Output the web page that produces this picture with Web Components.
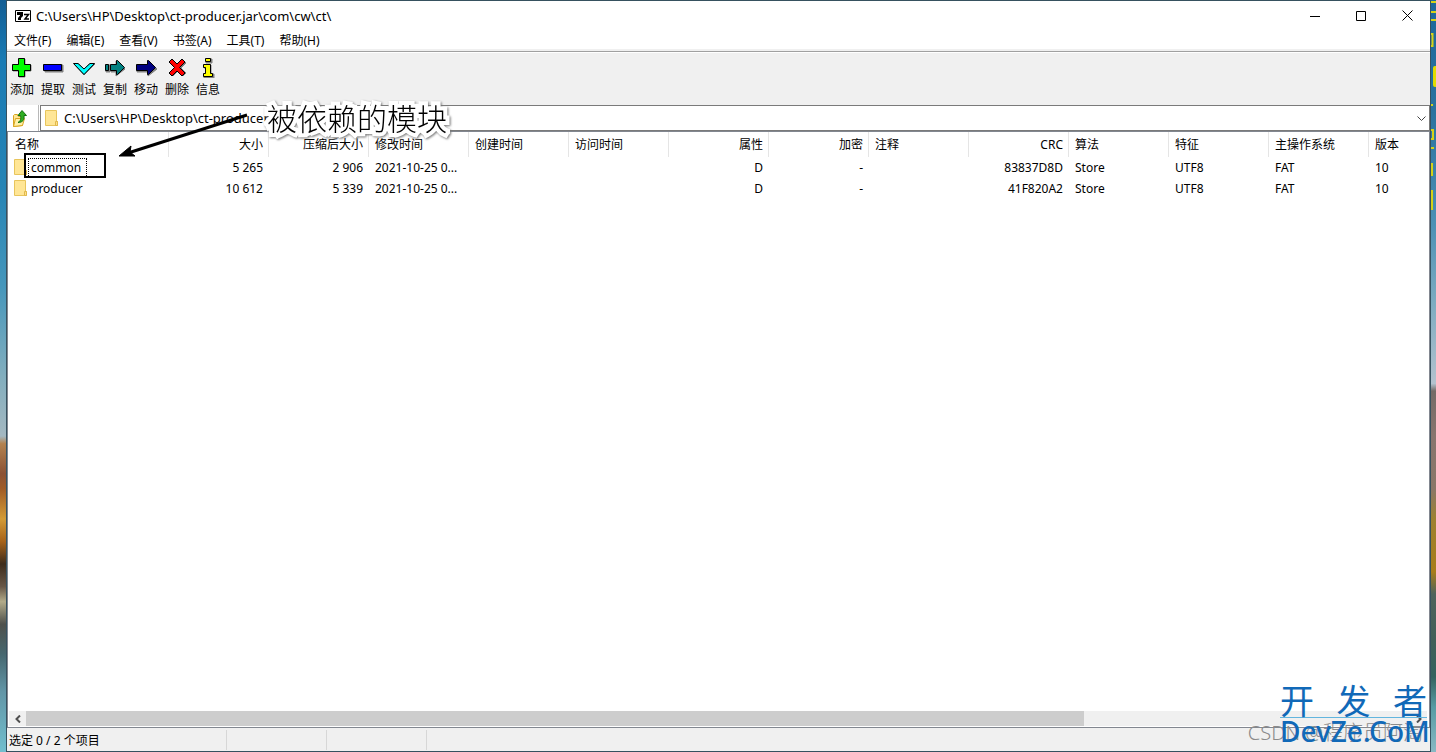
<!DOCTYPE html>
<html lang="zh-CN">
<head>
<meta charset="utf-8">
<title>C:\Users\HP\Desktop\ct-producer.jar\com\cw\ct\</title>
<style>
html, body { margin: 0; height: 100%; overflow: hidden; }
body { font: 12px/16px "Noto Sans", "Noto Sans CJK SC", sans-serif; color: #000; }
</style>
</head>
<body>
<desk-top>
  <archive-window>
    <title-bar slot="title">C:\Users\HP\Desktop\ct-producer.jar\com\cw\ct\</title-bar>
    <menu-bar slot="menu" items="文件(F),编辑(E),查看(V),书签(A),工具(T),帮助(H)"></menu-bar>
    <tool-bar slot="tools">
      <tool-button icon="add">添加</tool-button>
      <tool-button icon="extract">提取</tool-button>
      <tool-button icon="test">测试</tool-button>
      <tool-button icon="copy">复制</tool-button>
      <tool-button icon="move">移动</tool-button>
      <tool-button icon="delete">删除</tool-button>
      <tool-button icon="info">信息</tool-button>
    </tool-bar>
    <address-bar slot="address" path="C:\Users\HP\Desktop\ct-producer.jar\com\cw\ct\"></address-bar>
    <file-list slot="list"></file-list>
    <status-bar slot="status">选定 0 / 2 个项目</status-bar>
  </archive-window>
  <note-overlay slot="over">被依赖的模块</note-overlay>
  <site-mark slot="over"></site-mark>
</desk-top>
<script>
const define = (name, html, setup) => customElements.define(name, class extends HTMLElement {
  constructor() {
    super();
    this.attachShadow({ mode: 'open' }).innerHTML = '<style>:host,*{box-sizing:border-box}</style>' + html;
  }
  connectedCallback() { if (setup) setup(this, this.shadowRoot); }
});
const folder = '<svg width="14" height="17" viewBox="0 0 14 17" aria-hidden="true"><path d="M.5.5h11v11h1v4H.5z" fill="#ffe696" stroke="#e8c55c"/><path d="M10.500 15.500v-4h2v4z" fill="#ffe08a" stroke="#e0b94d"/></svg>';

define('desk-top', `<style>
:host{display:grid;grid-template-columns:6px minmax(0,1fr) 5px;height:100vh;position:relative;overflow:hidden}
.left{background:linear-gradient(#125d94 0,#197bb4 8%,#2684b5 25%,#4596bb 38%,#82aebe 50%,#a4b8c1 58%,#b3824f 59%,#8b5134 63%,#a05b26 65%,#d39b36 69%,#a76219 72%,#3e2c1b 75%,#685747 78%,#b2ab89 80%,#4e504b 83%,#46676f 87%,#6296a7 92%,#72bfce 100%)}
.right{display:block;width:5px;height:100%;background:linear-gradient(#1c679b 0,#2b739f 15%,#4d91b5 30%,#7cabc0 40%,#b3c2ce 51%,#746b67 52%,#88756e 58%,#8a7768 65%,#9d8130 69%,#a87d1a 76%,#4e635c 79%,#425f59 85%,#34635f 90%,#579ba3 94%,#89b9c4 100%)}
</style><div class="left"></div><slot></slot>
<svg class="right" viewBox="0 0 5 752" preserveAspectRatio="xMinYMin slice"><path d="M0 2h5M0 12h5M0 20h5M0 34h1.500v12H0M0 105h2M0 130h2v9H0M0 148h3M0 164h1v11H0M0 191h1v18H0" fill="none" stroke="#d5d217" stroke-width="2"/><rect x="2" y="66" width="6" height="21" rx="2" fill="#e2dc00"/></svg>
<slot name="over"></slot>`);

define('archive-window', `<style>
:host{display:flex;flex-direction:column;min-width:0;background:#fff;border:1px solid #36515f}
::slotted(file-list){flex:1;min-height:0}
</style><slot name="title"></slot><slot name="menu"></slot><slot name="tools"></slot><slot name="address"></slot><slot name="list"></slot><slot name="status"></slot>`);

define('title-bar', `<style>
:host{display:flex;align-items:center;height:29px;padding-left:8px}
.name{flex:1;margin-left:5px;font-size:13px;white-space:nowrap}
button{width:46px;height:29px;border:0;padding:0;background:none;display:grid;place-items:center}
</style>
<svg width="16" height="12" viewBox="0 0 16 12" aria-hidden="true"><path d="M.5.5h15v11H.5z" fill="#fff" stroke="#000"/><path d="M2 2h6v4L6 8v2H3V8l2-2.500V5H2z" fill="#000"/><path d="M9 4.500h4.500L10 9h4" fill="none" stroke="#000" stroke-width="1.500"/></svg>
<span class="name"><slot></slot></span>
<button aria-label="最小化"><svg width="10" height="10"><path d="M0 5.500h10" stroke="#000"/></svg></button>
<button aria-label="最大化"><svg width="10" height="10"><path d="M.5.5h9v9h-9z" fill="none" stroke="#000"/></svg></button>
<button aria-label="关闭"><svg width="11" height="11"><path d="M.5.5l10 10M10.500.5l-10 10" stroke="#000"/></svg></button>`);

define('menu-bar', `<style>
:host{display:flex;gap:1px;height:21px;border-bottom:2px solid #f0f0f0}
button{font:inherit;color:inherit;border:0;background:none;padding:0 7px;height:21px;white-space:nowrap}
</style>`, (el, root) => {
  for (const text of el.getAttribute('items').split(',')) {
    const b = document.createElement('button');
    b.textContent = text;
    root.append(b);
  }
});

define('tool-bar', `<style>
:host{display:flex;height:54px;background:#f0f0f0;border-top:1px solid #a0a0a0;box-shadow:inset 0 1px #fff;padding-top:6px}
</style><slot></slot>`);

const icons = {
  add: '<path class="s" d="M8 1h6v6h6v6h-6v6H8v-6H2V7h6z"/><path d="M7.500.5h6v6h6v6h-6v6h-6v-6h-6v-6h6z" fill="#0f0"/>',
  extract: '<path class="s" d="M3 7h18v7H3z"/><path d="M1.500 6.500h18v6h-18z" fill="#00f"/>',
  test: '<path class="s" d="M1 6h5l5 5 5-5h6L11 17z"/><path d="M.5 5.500H5l6 5.500 6-5.500h4.500L11 16.500z" fill="#0ff"/>',
  copy: '<path class="s" d="M7 7h5V3l9 8-9 7v-4H7zM2 7h4v7H2z"/><path d="M6.500 6.500h6v-4h1l7 7-7 7h-1v-4h-6zM1.500 6.500h3v6h-3z" fill="#008080"/>',
  move: '<path class="s" d="M2 7h11V3l9 8-9 7v-4H2z"/><path d="M1.500 6.500h11v-4h1l7 7-7 7h-1v-4h-11z" fill="#000080"/>',
  delete: '<path class="s" d="M4 4l3-2 5 5 5-5 3 3-5 5 5 5-3 3-5-5-5 5-3-3 5-5z"/><path d="M3 4l3-3 5 5 5-5 3 3-5.500 5.500L19 15l-3 3-5-5-5 5-3-3 5.500-5.500z" fill="#f00" stroke="#a00000"/>',
  info: '<path class="s" d="M9 1h6v4H9zM7 7h7v9h3v4H7v-4h2v-6H7z"/><path d="M8.500.5h5v3h-5zM6.500 6.500h7v9h2v3h-9v-3h2v-6h-2z" fill="#ff0"/>'
};
define('tool-button', `<style>
:host{display:block;width:31px}
button{display:flex;flex-direction:column;align-items:center;gap:4px;width:100%;border:0;padding:0 1px 0 0;background:none;font:inherit;color:inherit;white-space:nowrap}
path{stroke:#000}.s{fill:#808080;stroke:#808080}
</style><button><svg width="22" height="20" viewBox="0 0 22 20" aria-hidden="true"></svg><span><slot></slot></span></button>`,
(el, root) => { root.querySelector('svg').innerHTML = icons[el.getAttribute('icon')]; });

define('address-bar', `<style>
:host{display:flex;gap:1px;height:26px;background:#fff}
button{width:32px;border:0;border-right:1px solid #b8b8b8;padding:0 6px 0 0;background:none;display:grid;place-items:center}
.combo{flex:1;display:flex;align-items:center;position:relative;border:1px solid #7a7a7a;padding-left:4px}
select{flex:1;min-width:0;height:24px;appearance:none;border:0;padding:0;margin-left:5px;background:none;font:inherit;font-size:13px;color:inherit}
.arrow{position:absolute;right:3px;top:10px;pointer-events:none}
</style>
<button aria-label="上一级"><svg width="14" height="17" viewBox="0 0 14 17"><path d="M.5 5.500l1-1h3l1 2h4v9l-9 1z" fill="#ffe696" stroke="#d9a520"/><path d="M2.500 8.500h9l-2 7-9 1z" fill="#fff0a8" stroke="#d9a520"/><path d="M5 12.500C8 11 8 8 7.500 5.500H5L9 .5l4.500 5H11c.5 4-1 7-6 7z" fill="#2fae22" stroke="#14700f"/></svg></button>
<div class="combo">${folder}<select aria-label="路径"><option></option></select>
<svg class="arrow" width="9" height="6" viewBox="0 0 9 6"><path d="M.5.5l4 4 4-4" fill="none" stroke="#444"/></svg></div>`,
(el, root) => { root.querySelector('option').textContent = el.getAttribute('path'); });

const columns = ['名称', '大小>', '压缩后大小>', '修改时间', '创建时间', '访问时间', '属性>', '加密>', '注释', 'CRC>', '算法', '特征', '主操作系统', '版本'];
const rows = [
  ['common', '5 265', '2 906', '2021-10-25 0...', '', '', 'D', '-', '', '83837D8D', 'Store', 'UTF8', 'FAT', '10'],
  ['producer', '10 612', '5 339', '2021-10-25 0...', '', '', 'D', '-', '', '41F820A2', 'Store', 'UTF8', 'FAT', '10']
];
define('file-list', `<style>
:host{display:flex;flex-direction:column;border:1px solid #828790;background:#fff}
.view{flex:1;overflow:hidden}
table{table-layout:fixed;border-collapse:separate;border-spacing:0;width:1461px}
col{width:100px}col:first-child{width:161px}
th,td{padding:0 6px;text-align:left;font-weight:400;white-space:nowrap;overflow:hidden}
th{height:25px;border-right:1px solid #e5e5e5}
th:first-child{padding-left:7px}
.r{text-align:right;padding:0 5px 0 0}
td{height:21px}td.r{padding-right:6px}
.name{display:flex;align-items:center;gap:1px}
.name span{padding:1px 5px 1px 2px;border:1px solid transparent;margin-left:-1px}
tr:first-child .name span{border:1px dotted #000}
.bar{display:flex;height:15px;background:#f0f0f0;margin:0 2px 1px 1px}
.bar button{width:17px;border:0;padding:0;background:none;display:grid;place-items:center}
.thumb{flex:13;background:#cdcdcd}.rest{flex:4}
</style><div class="view"><table><colgroup></colgroup><thead><tr></tr></thead><tbody></tbody></table></div>
<div class="bar"><button aria-label="向左"><svg width="8" height="8"><path d="M6 .5L2.500 4 6 7.500" fill="none" stroke="#505050" stroke-width="2"/></svg></button><div class="thumb"></div><div class="rest"></div><button aria-label="向右"><svg width="8" height="8"><path d="M2 .5L5.500 4 2 7.500" fill="none" stroke="#505050" stroke-width="2"/></svg></button></div>`,
(el, root) => {
  const cls = c => c.endsWith('>') ? ' class="r"' : '';
  root.querySelector('colgroup').innerHTML = columns.map(() => '<col>').join('');
  root.querySelector('thead tr').innerHTML = columns.map(c => `<th${cls(c)}>${c.replace('>', '')}</th>`).join('');
  root.querySelector('tbody').innerHTML = rows.map(r => '<tr>' + r.map((v, i) =>
    `<td${cls(columns[i])}>${i ? v : `<div class="name">${folder}<span>${v}</span></div>`}</td>`).join('') + '</tr>').join('');
});

define('status-bar', `<style>
:host{display:flex;height:23px;background:#f0f0f0;padding:2px 0 1px;align-items:stretch}
div{width:100px;border-right:1px solid #d7d7d7}
.text{width:220px;padding:3px 0 0 2px;white-space:nowrap}
</style><div class="text"><slot></slot></div><div></div><div></div>`);

define('note-overlay', `<style>
:host{position:absolute;left:0;top:90px;pointer-events:none}
.text{position:absolute;left:267px;top:7px;font:300 30px/40px "Noto Sans CJK SC",sans-serif;white-space:nowrap;-webkit-text-stroke:8px #fff;paint-order:stroke fill;filter:drop-shadow(1px 1px 1px #777)}
svg{display:block}
</style><svg width="260" height="92" viewBox="0 0 260 92" aria-hidden="true"><path d="M247 25L128 63" stroke="#000" stroke-width="3"/><path d="M119 66l12-10-1 6 5 4z" fill="#000" stroke="#000"/><rect x="25" y="64" width="80" height="23" fill="none" stroke="#000" stroke-width="2"/></svg><span class="text"><slot></slot></span>`);

define('site-mark', `<style>
:host{position:absolute;right:9px;bottom:8px;width:147px;color:#1169b8;pointer-events:none;isolation:isolate}
.top{display:flex;justify-content:space-between;font:400 34px/34px "Noto Sans CJK SC",sans-serif;border-bottom:1px solid #62b5de}
.bottom{font:500 28px/26px "Noto Sans",sans-serif;text-align:center;white-space:nowrap}
.by{position:absolute;right:4px;bottom:-2px;font:300 20px/26px "Noto Sans","Noto Sans CJK SC",sans-serif;color:#8b8b8b;white-space:nowrap;z-index:-1}
</style><div class="by">CSDN @程序员阿淘</div><div class="top"><span>开</span><span>发</span><span>者</span></div><div class="bottom">DevZe.CoM</div>`);
</script>
</body>
</html>
